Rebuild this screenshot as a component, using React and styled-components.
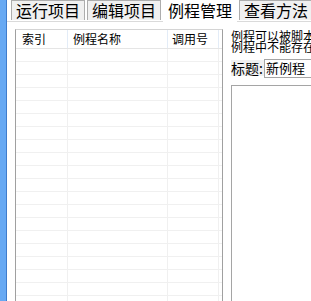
import React from 'react'
import styled, { createGlobalStyle } from 'styled-components'

const GlobalStyle = createGlobalStyle`
  html, body {
    margin: 0;
    padding: 0;
    background: #ffffff;
    overflow: hidden;
  }
  * {
    box-sizing: border-box;
  }
`

const cjk = `"Noto Sans CJK SC", "DejaVu Sans", sans-serif`

const Window = styled.div`
  display: flex;
  width: 100vw;
  height: 100vh;
  overflow: hidden;
  font-family: ${cjk};
  color: #000;
`

const SideStrip = styled.div`
  flex: 0 0 7px;
  background: #67a9f3;
  border-right: 1px solid #3f7ccc;
`

const Main = styled.div`
  flex: 1;
  display: flex;
  flex-direction: column;
  min-width: 0;
`

const TabBar = styled.div`
  display: flex;
  align-items: flex-start;
  height: 22px;
  padding-left: 4px;
  gap: 2px;
  white-space: nowrap;
`

const Tab = styled.div`
  flex: 0 0 auto;
  height: ${(p) => (p.$active ? '22px' : '20px')};
  padding: 0 4px;
  font-size: 16px;
  line-height: 19px;
  background: ${(p) => (p.$active ? '#ffffff' : '#f0f0f0')};
  border: 1px solid ${(p) => (p.$active ? '#ffffff' : '#adadad')};
  border-bottom: none;
  position: relative;
  z-index: ${(p) => (p.$active ? 2 : 0)};
`

const Panel = styled.div`
  flex: 1;
  display: flex;
  gap: 8px;
  margin-top: -1px;
  border-top: 1px solid #dadada;
  padding: 7px 0 0 8px;
  min-height: 0;
`

const List = styled.div`
  flex: 0 0 208px;
  border: 1px solid #a0a0a0;
  border-top-color: #d4d4d4;
  border-bottom: none;
  overflow: hidden;
`

const Row = styled.div`
  display: grid;
  grid-template-columns: 52px 100px 51px 1fr;
  height: ${(p) => (p.$header ? '19px' : '13px')};
  border-bottom: 1px solid ${(p) => (p.$header ? '#e5e5e5' : '#f0f0f0')};
`

const Cell = styled.div`
  border-right: 1px solid ${(p) => (p.$header ? '#e3ecf7' : '#f0f0f0')};
  padding-left: ${(p) => p.$pad || 6}px;
  font-size: 12px;
  line-height: 18px;
  white-space: nowrap;
  overflow: hidden;
`

const Side = styled.div`
  flex: 1;
  display: flex;
  flex-direction: column;
  min-width: 0;
  width: 200px;
`

const Hint = styled.div`
  font-size: 12px;
  line-height: 11px;
  padding-top: 1px;
  white-space: nowrap;
`

const TitleRow = styled.div`
  display: flex;
  align-items: flex-end;
  margin-top: 4px;
  height: 20px;
`

const TitleLabel = styled.span`
  font-size: 14px;
  line-height: 16px;
  background: #f0f0f0;
  padding-right: 1px;
  white-space: nowrap;
`

const TitleInput = styled.div`
  width: 160px;
  height: 19px;
  border: 1px solid #a5a5a5;
  border-right: none;
  font-size: 13px;
  line-height: 16px;
  padding-left: 1px;
  white-space: nowrap;
  margin-bottom: -2px;
`

const Editor = styled.div`
  margin-top: 9px;
  width: 200px;
  flex: 1;
  border: 1px solid #a5a5a5;
  border-right: none;
  border-bottom: none;
  background: #fff;
`

const rows = Array.from({ length: 22 })

export default function App() {
  return (
    <>
      <GlobalStyle />
      <Window>
        <SideStrip />
        <Main>
          <TabBar>
            <Tab>运行项目</Tab>
            <Tab>编辑项目</Tab>
            <Tab $active>例程管理</Tab>
            <Tab>查看方法</Tab>
          </TabBar>
          <Panel>
            <List>
              <Row $header>
                <Cell $header>索引</Cell>
                <Cell $header $pad={5}>例程名称</Cell>
                <Cell $header $pad={4}>调用号</Cell>
                <Cell $header />
              </Row>
              {rows.map((_, i) => (
                <Row key={i}>
                  <Cell />
                  <Cell />
                  <Cell />
                  <Cell />
                </Row>
              ))}
            </List>
            <Side>
              <Hint>
                例程可以被脚本调用，每个例程有唯一的调用号。
                <br />
                例程中不能存在同名的变量。
              </Hint>
              <TitleRow>
                <TitleLabel>标题:</TitleLabel>
                <TitleInput>新例程</TitleInput>
              </TitleRow>
              <Editor />
            </Side>
          </Panel>
        </Main>
      </Window>
    </>
  )
}
